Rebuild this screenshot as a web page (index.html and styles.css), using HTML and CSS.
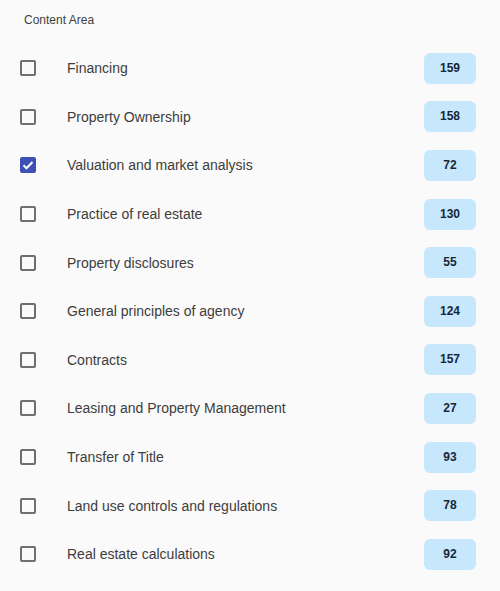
FILE: index.html
```html
<!DOCTYPE html>
<html lang="en">
<head>
    <meta charset="UTF-8">
    <meta name="viewport" content="width=device-width, initial-scale=1.0">
    <title>Content Area</title>
    <link rel="stylesheet" href="styles.css">
</head>
<body>
    <div class="panel">
        <div class="panel-title">Content Area</div>
        <ul class="area-list">
            <li class="area-row">
                <span class="check"></span>
                <span class="area-name">Financing</span>
                <span class="count">159</span>
            </li>
            <li class="area-row">
                <span class="check"></span>
                <span class="area-name">Property Ownership</span>
                <span class="count">158</span>
            </li>
            <li class="area-row">
                <span class="check checked">
                    <svg viewBox="0 0 16 16" width="16" height="16"><path d="M3.5 8.2l3 3 6-6.2" fill="none" stroke="#fff" stroke-width="2"/></svg>
                </span>
                <span class="area-name">Valuation and market analysis</span>
                <span class="count">72</span>
            </li>
            <li class="area-row">
                <span class="check"></span>
                <span class="area-name">Practice of real estate</span>
                <span class="count">130</span>
            </li>
            <li class="area-row">
                <span class="check"></span>
                <span class="area-name">Property disclosures</span>
                <span class="count">55</span>
            </li>
            <li class="area-row">
                <span class="check"></span>
                <span class="area-name">General principles of agency</span>
                <span class="count">124</span>
            </li>
            <li class="area-row">
                <span class="check"></span>
                <span class="area-name">Contracts</span>
                <span class="count">157</span>
            </li>
            <li class="area-row">
                <span class="check"></span>
                <span class="area-name">Leasing and Property Management</span>
                <span class="count">27</span>
            </li>
            <li class="area-row">
                <span class="check"></span>
                <span class="area-name">Transfer of Title</span>
                <span class="count">93</span>
            </li>
            <li class="area-row">
                <span class="check"></span>
                <span class="area-name">Land use controls and regulations</span>
                <span class="count">78</span>
            </li>
            <li class="area-row">
                <span class="check"></span>
                <span class="area-name">Real estate calculations</span>
                <span class="count">92</span>
            </li>
        </ul>
    </div>
</body>
</html>
```

FILE: styles.css
```css
body {
    font-family: 'Liberation Sans', Arial, sans-serif;
    background-color: #fafafa;
    margin: 0;
    padding: 0;
    color: #333;
}
.panel {
    padding: 11px 24px 0 20px;
}
.panel-title {
    font-size: 12px;
    color: #424242;
    padding-left: 4px;
    height: 18px;
    line-height: 18px;
}
.area-list {
    list-style: none;
    margin: 0;
    padding: 0;
    margin-top: 15px;
}
.area-row {
    display: flex;
    align-items: center;
    height: 48.6px;
}
.check {
    width: 16px;
    height: 16px;
    box-sizing: border-box;
    border: 2px solid #6f6f6f;
    border-radius: 2px;
    flex-shrink: 0;
    display: flex;
}
.check.checked {
    border: none;
    background-color: #3f51b5;
}
.area-name {
    flex: 1;
    margin-left: 31px;
    font-size: 14px;
    color: #3d3d3d;
}
.count {
    width: 52px;
    height: 31px;
    line-height: 31px;
    text-align: center;
    background-color: #c7e7fd;
    border-radius: 6px;
    font-size: 12px;
    font-weight: bold;
    color: #15283a;
}
```
